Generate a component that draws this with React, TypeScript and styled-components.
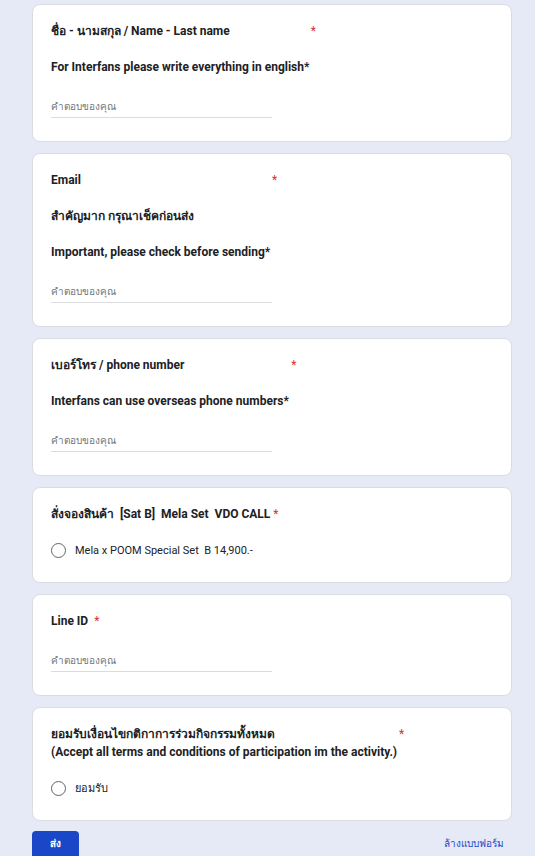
import React from "react";
import styled, { createGlobalStyle } from "styled-components";

const Global = createGlobalStyle`
  html, body { margin: 0; padding: 0; background: #e6eaf7; }
  body { font-family: Roboto, "Noto Sans", "DejaVu Sans", sans-serif; color: #202124; }
`;

const Page = styled.div`
  width: 480px;
  margin-left: 32px;
  padding-top: 4px;
  display: flex;
  flex-direction: column;
  gap: 11px;
`;

const Card = styled.section`
  background: #ffffff;
  border-radius: 8px;
  border: 1px solid #dadce0;
  box-sizing: border-box;
  padding: 17px 18px 23px;
  display: flex;
  flex-direction: column;
`;

const Title = styled.div`
  font-size: 12px;
  font-weight: 700;
  line-height: 18px;
  color: #202124;
`;

const Star = styled.span<{ $gap: number }>`
  color: #d93025;
  font-weight: 400;
  margin-left: ${(p) => p.$gap}px;
`;

const Desc = styled.div`
  font-size: 12px;
  font-weight: 700;
  line-height: 18px;
  margin-top: 18px;
`;

const Input = styled.div`
  width: 221px;
  margin-top: 22px;
  font-size: 10px;
  line-height: 18px;
  color: #70757a;
  padding-bottom: 1px;
  border-bottom: 1px solid #dadce0;
`;

const Option = styled.label`
  display: flex;
  align-items: center;
  gap: 9px;
  margin-top: 18px;
  height: 18px;
  font-size: 11px;
  color: #202124;
`;

const Radio = styled.span`
  width: 13px;
  height: 13px;
  border-radius: 50%;
  border: 1.5px solid #5f6368;
  flex: none;
`;

const Footer = styled.div`
  display: flex;
  justify-content: space-between;
  align-items: flex-start;
  padding-right: 6px;
  margin-top: -1px;
`;

const Submit = styled.button`
  width: 47px;
  height: 36px;
  border: none;
  border-radius: 4px 4px 0 0;
  background: #1a47c7;
  color: #fff;
  font-family: inherit;
  font-size: 10px;
  font-weight: 700;
  padding: 6px 0 16px;
  line-height: 14px;
`;

const Clear = styled.span`
  font-size: 10px;
  color: #1a47c7;
  line-height: 14px;
  margin-top: 6px;
  margin-right: 2px;
`;

const TextCard = ({ title, gap, desc }: { title: string; gap: number; desc: string[] }) => (
  <Card>
    <Title>
      {title}
      <Star $gap={gap}>*</Star>
    </Title>
    {desc.map((d) => (
      <Desc key={d}>{d}</Desc>
    ))}
    <Input>คำตอบของคุณ</Input>
  </Card>
);

export default function App() {
  return (
    <>
      <Global />
      <Page>
        <TextCard
          title="ชื่อ - นามสกุล / Name - Last name"
          gap={81}
          desc={["For Interfans please write everything in english*"]}
        />
        <TextCard
          title="Email"
          gap={191}
          desc={["สำคัญมาก กรุณาเช็คก่อนส่ง", "Important, please check before sending*"]}
        />
        <TextCard
          title="เบอร์โทร / phone number"
          gap={107}
          desc={["Interfans can use overseas phone numbers*"]}
        />
        <Card>
          <Title>
            สั่งจองสินค้า&nbsp; [Sat B]&nbsp; Mela Set&nbsp; VDO CALL
            <Star $gap={3}>*</Star>
          </Title>
          <Option>
            <Radio />
            Mela x POOM Special Set&nbsp; B 14,900.-
          </Option>
        </Card>
        <Card>
          <Title>
            Line ID
            <Star $gap={6}>*</Star>
          </Title>
          <Input>คำตอบของคุณ</Input>
        </Card>
        <Card>
          <Title>
            ยอมรับเงื่อนไขกติกาการร่วมกิจกรรมทั้งหมด
            <Star $gap={124}>*</Star>
            <br />
            (Accept all terms and conditions of participation im the activity.)
          </Title>
          <Option>
            <Radio />
            ยอมรับ
          </Option>
        </Card>
        <Footer>
          <Submit>ส่ง</Submit>
          <Clear>ล้างแบบฟอร์ม</Clear>
        </Footer>
      </Page>
    </>
  );
}
